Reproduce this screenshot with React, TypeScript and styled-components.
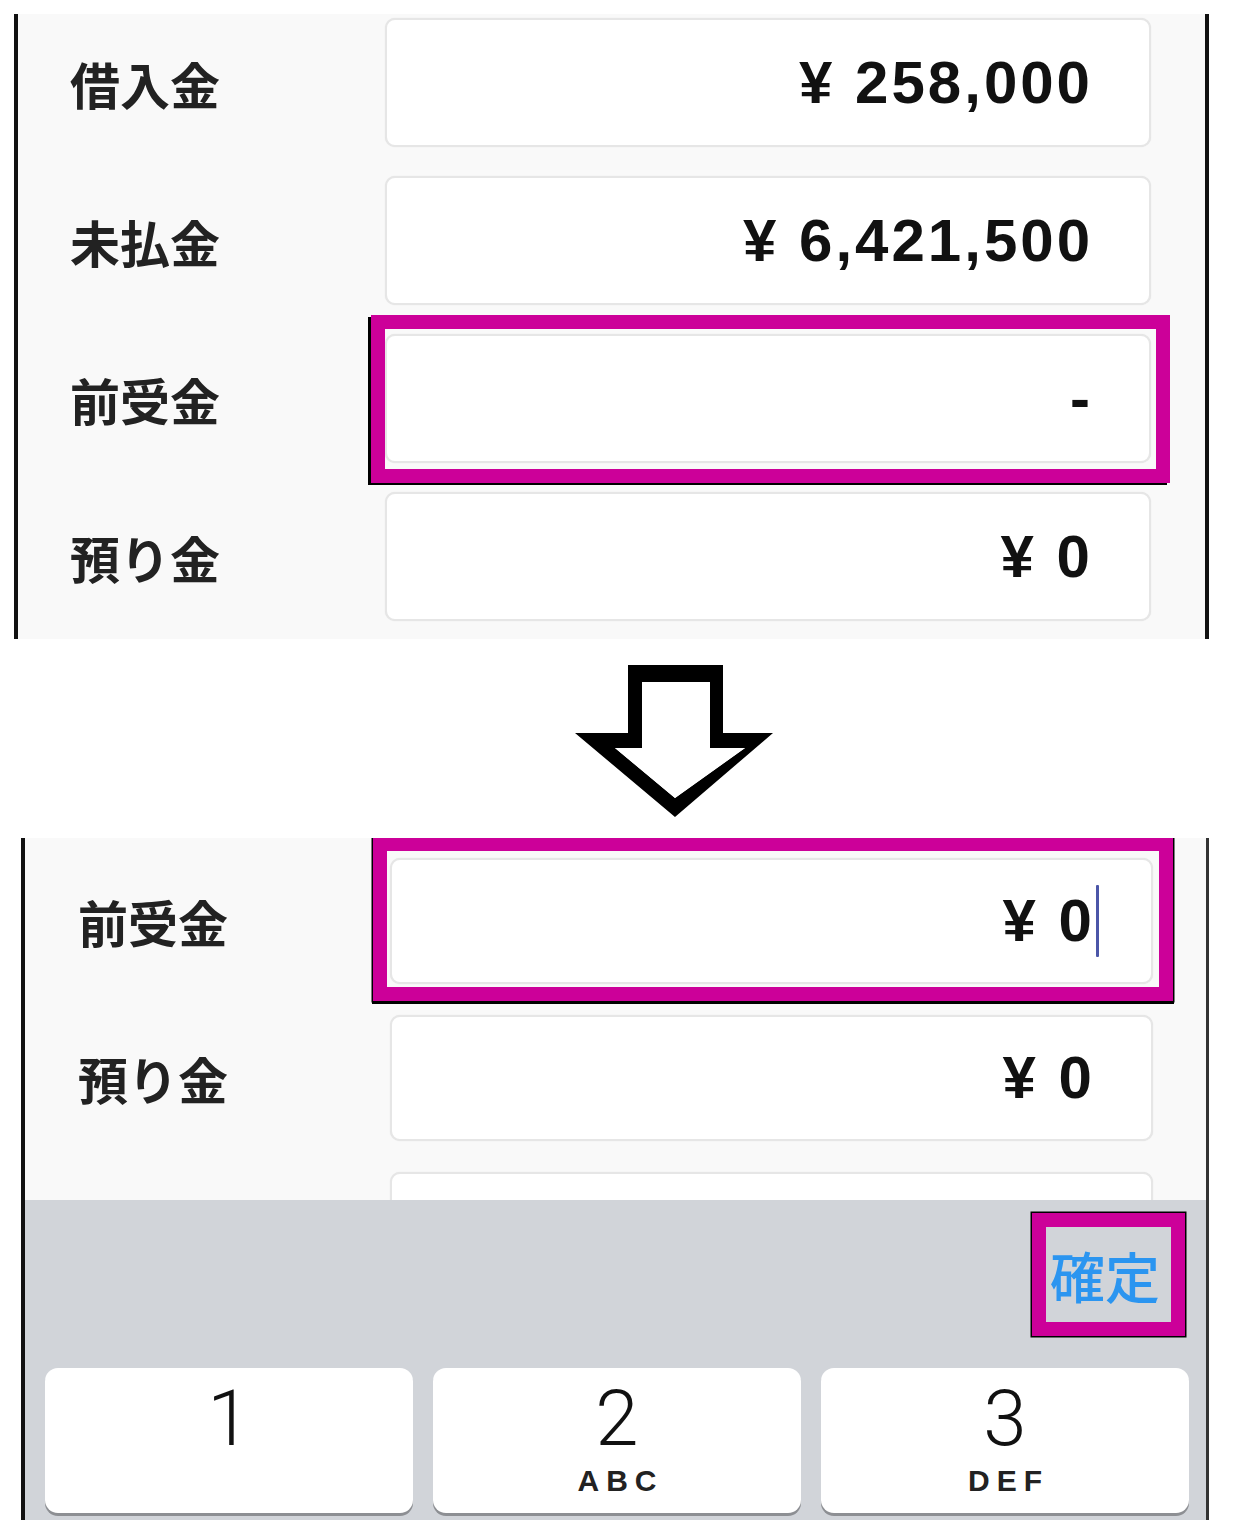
import React from "react";
import styled, { createGlobalStyle } from "styled-components";

const GlobalStyle = createGlobalStyle`
  html, body {
    margin: 0;
    padding: 0;
    background: #ffffff;
  }
  body {
    font-family: "Liberation Sans", "Noto Sans CJK JP", sans-serif;
    color: #111;
  }
`;

const Page = styled.div`
  width: 1255px;
  padding-top: 14px;
`;

const Panel = styled.div<{ $left: number; $width: number; $rightColor: string; $rightWidth: number }>`
  box-sizing: border-box;
  margin-left: ${(p) => p.$left}px;
  width: ${(p) => p.$width}px;
  background: #f9f9f9;
  border-left: 4px solid #111;
  border-right: ${(p) => p.$rightWidth}px solid ${(p) => p.$rightColor};
  display: flex;
  flex-direction: column;
`;

const FieldList = styled.div<{ $top: number; $bottom: number; $gap: number; $height?: number }>`
  display: flex;
  flex-direction: column;
  gap: ${(p) => p.$gap}px;
  padding-top: ${(p) => p.$top}px;
  padding-bottom: ${(p) => p.$bottom}px;
  ${(p) => (p.$height ? `height: ${p.$height}px; overflow: hidden; box-sizing: border-box;` : "")}
`;

const Row = styled.div<{ $labelWidth: number; $padRight: number; $height: number }>`
  display: grid;
  grid-template-columns: ${(p) => p.$labelWidth}px 1fr;
  align-items: center;
  height: ${(p) => p.$height}px;
  flex-shrink: 0;
  padding-right: ${(p) => p.$padRight}px;
`;

const Label = styled.div<{ $pad: number }>`
  padding-left: ${(p) => p.$pad}px;
  font-family: "Noto Sans CJK JP", sans-serif;
  font-weight: 700;
  font-size: 50px;
  line-height: 1;
  color: #222;
`;

const Field = styled.div`
  position: relative;
  box-sizing: border-box;
  height: 100%;
  background: #fff;
  border: 2px solid #e6e6e6;
  border-radius: 10px;
  box-shadow: 0 0 1px #dcdcdc;
  display: flex;
  justify-content: flex-end;
  align-items: center;
  padding-right: 56px;
  font-family: "Liberation Sans", "Noto Sans CJK JP", sans-serif;
  font-weight: 700;
  font-size: 60px;
  line-height: 1;
  letter-spacing: 3px;
  color: #111;
  white-space: pre;
`;

const Caret = styled.span`
  display: inline-block;
  width: 3px;
  height: 72px;
  margin-left: 1px;
  margin-right: -4px;
  background: #4b56a8;
  border-radius: 1px;
`;

const Highlight = styled.div<{ $inset: string; $shadow: string }>`
  position: absolute;
  inset: ${(p) => p.$inset};
  border: 14px solid #cc0099;
  box-shadow: ${(p) => p.$shadow};
  pointer-events: none;
`;

const ArrowRow = styled.div`
  height: 199px;
  box-sizing: border-box;
  padding-top: 16px;
  padding-left: 565px;
`;

const Keyboard = styled.div`
  background: #d1d4d9;
  height: 320px;
  display: flex;
  flex-direction: column;
`;

const AccessoryBar = styled.div`
  height: 168px;
  box-sizing: border-box;
  display: flex;
  justify-content: flex-end;
  align-items: center;
  padding: 0 46px 20px 0;
`;

const Confirm = styled.div`
  position: relative;
  font-family: "Noto Sans CJK JP", sans-serif;
  font-weight: 500;
  font-size: 55px;
  line-height: 1;
  color: #2b95f0;
`;

const KeyRow = styled.div`
  display: grid;
  grid-template-columns: repeat(3, 1fr);
  gap: 20px;
  padding: 0 17px 0 20px;
`;

const Key = styled.div`
  height: 145px;
  background: #fff;
  border-radius: 13px;
  box-shadow: 0 3px 0 #8d8f93;
  display: flex;
  flex-direction: column;
  align-items: center;
  padding-top: 12px;
  box-sizing: border-box;
`;

const Digit = styled.div`
  font-family: Roboto, "Liberation Sans", sans-serif;
  font-weight: 300;
  font-size: 78px;
  line-height: 78px;
  color: #111;
`;

const Letters = styled.div`
  margin-top: 8px;
  font-family: "Liberation Sans", sans-serif;
  font-weight: 700;
  font-size: 30px;
  line-height: 30px;
  letter-spacing: 7px;
  margin-right: -7px;
  color: #222;
`;

const DownArrow = () => (
  <svg width="220" height="170" viewBox="0 0 220 170">
    <path
      fillRule="evenodd"
      fill="#000"
      d="M63 10 L158 10 L158 78 L208 78 L110 162 L10 78 L63 78 Z M77 27 L77 93 L50 93 L110 143 L180 93 L145 93 L145 27 Z"
    />
    <path fill="#fff" d="M77 27 L145 27 L145 93 L180 93 L110 143 L50 93 L77 93 Z" />
  </svg>
);

const topRows = [
  { label: "借入金", value: "¥ 258,000" },
  { label: "未払金", value: "¥ 6,421,500" },
  { label: "前受金", value: "-", highlight: true },
  { label: "預り金", value: "¥ 0" },
];

const keys = [
  { digit: "1", letters: "" },
  { digit: "2", letters: "ABC" },
  { digit: "3", letters: "DEF" },
];

export default function App() {
  return (
    <>
      <GlobalStyle />
      <Page>
        <Panel $left={14} $width={1195} $rightColor="#111" $rightWidth={4}>
          <FieldList $top={4} $bottom={18} $gap={29}>
            {topRows.map((r) => (
              <Row key={r.label} $labelWidth={367} $padRight={54} $height={129}>
                <Label $pad={52}>{r.label}</Label>
                <Field>
                  {r.value}
                  {r.highlight && (
                    <Highlight $inset="-21px -21px -22px -16px" $shadow="-3px 2px 0 #000" />
                  )}
                </Field>
              </Row>
            ))}
          </FieldList>
        </Panel>

        <ArrowRow>
          <DownArrow />
        </ArrowRow>

        <Panel $left={21} $width={1188} $rightColor="#333" $rightWidth={3}>
          <FieldList $top={20} $bottom={0} $gap={31} $height={362}>
            <Row $labelWidth={365} $padRight={53} $height={126}>
              <Label $pad={53}>前受金</Label>
              <Field>
                ¥ 0
                <Caret />
                <Highlight
                  $inset="-23px -22px -19px -19px"
                  $shadow="0 0 0 1.5px #000, 0 2px 0 1px #000"
                />
              </Field>
            </Row>
            <Row $labelWidth={365} $padRight={53} $height={126}>
              <Label $pad={53}>預り金</Label>
              <Field>¥ 0</Field>
            </Row>
            <Row $labelWidth={365} $padRight={53} $height={126}>
              <Label $pad={53}></Label>
              <Field />
            </Row>
          </FieldList>

          <Keyboard>
            <AccessoryBar>
              <Confirm>
                確定
                <Highlight $inset="-34px -25px -34px -18px" $shadow="0 0 0 1.5px #000" />
              </Confirm>
            </AccessoryBar>
            <KeyRow>
              {keys.map((k) => (
                <Key key={k.digit}>
                  <Digit>{k.digit}</Digit>
                  {k.letters && <Letters>{k.letters}</Letters>}
                </Key>
              ))}
            </KeyRow>
          </Keyboard>
        </Panel>
      </Page>
    </>
  );
}
